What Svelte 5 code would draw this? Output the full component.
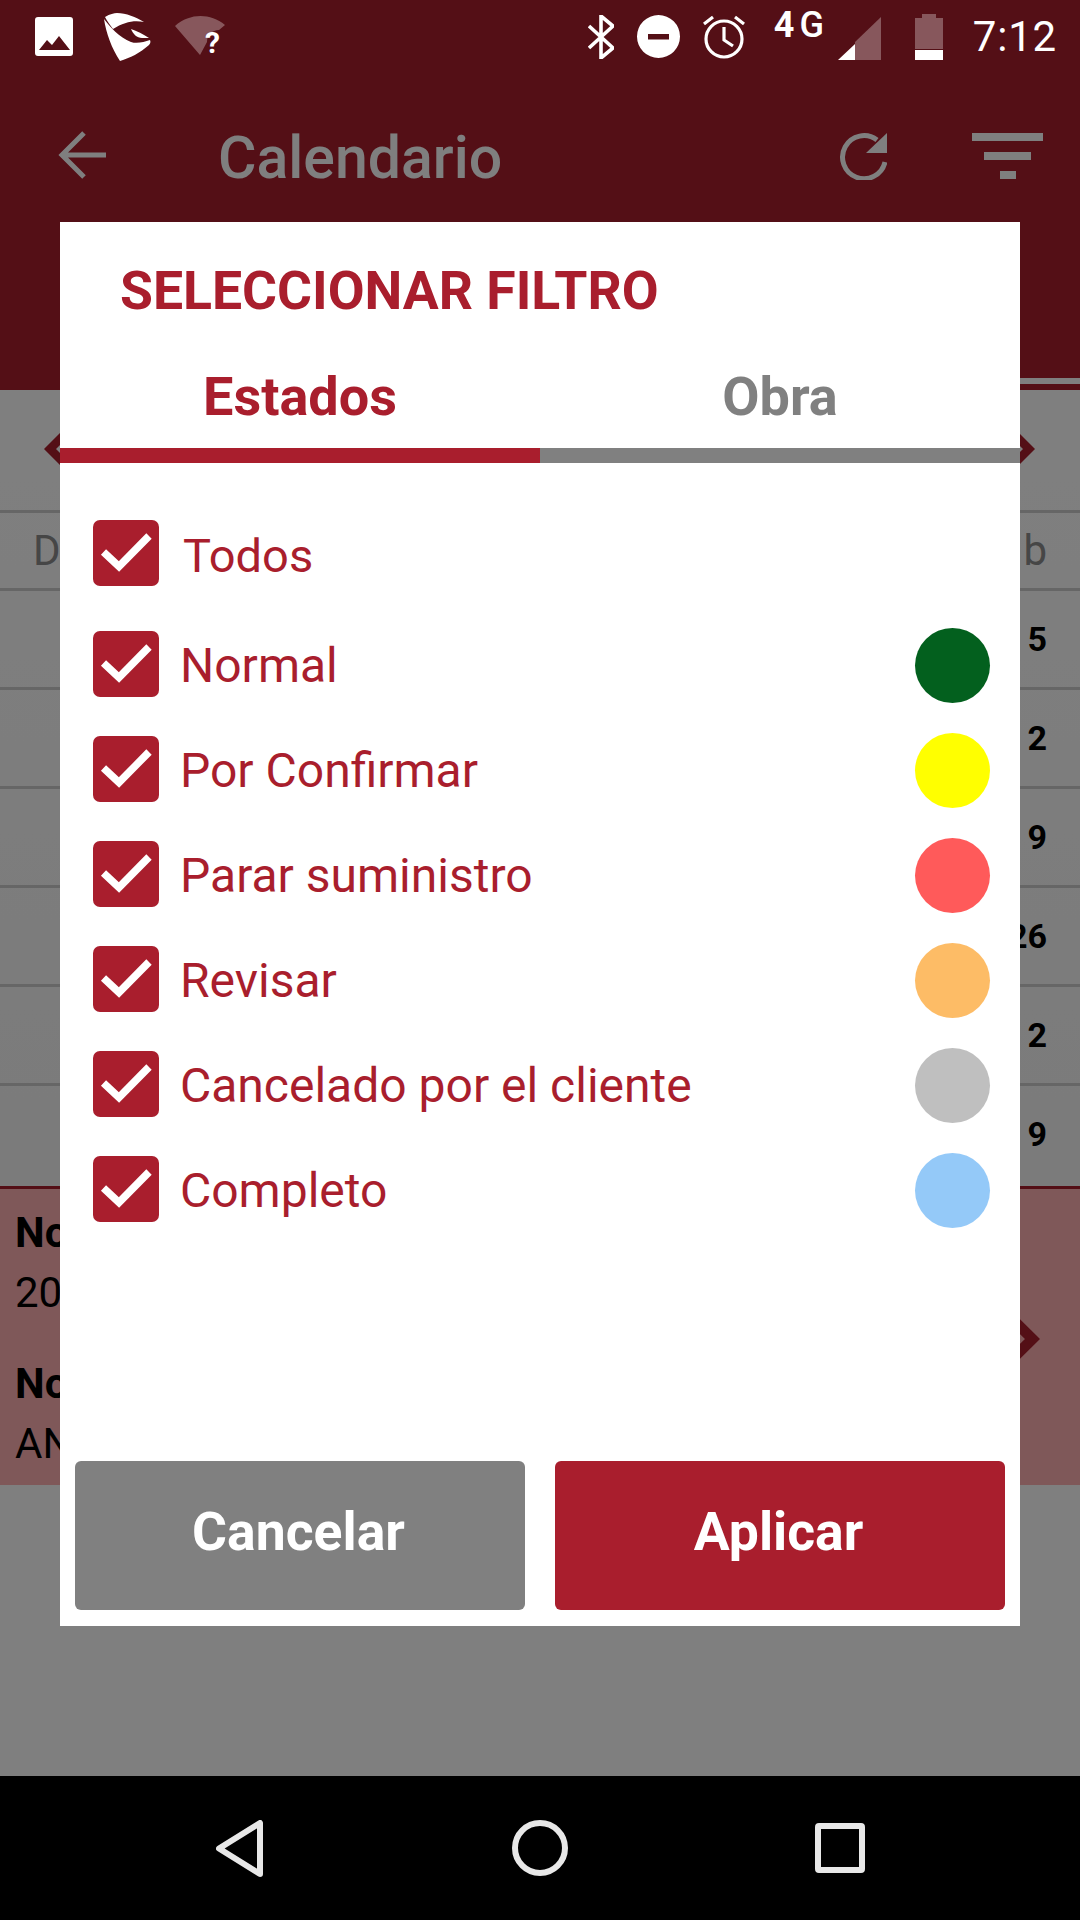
<script>
  const weeks = ['5', '2', '9', '26', '2', '9'];
  const filters = [
    { label: 'Normal', color: '#03601e' },
    { label: 'Por Confirmar', color: '#ffff00' },
    { label: 'Parar suministro', color: '#ff5a5a' },
    { label: 'Revisar', color: '#fdbc66' },
    { label: 'Cancelado por el cliente', color: '#bfbfbf' },
    { label: 'Completo', color: '#94c9f8' }
  ];
</script>

{#snippet check()}
  <svg class="check" viewBox="0 0 66 66" aria-hidden="true">
    <rect width="66" height="66" rx="7" fill="#a91e2d" />
    <path d="M10.500 32 L26 46.500 L56 16" fill="none" stroke="#fff" stroke-width="7.500" />
  </svg>
{/snippet}

<div class="screen">
  <header class="top">
    <div class="status">
      <div class="status-left">
        <svg class="s-image" viewBox="0 0 38 39"><path fill-rule="evenodd" fill="#fff" d="M3 0h32a3 3 0 0 1 3 3v33a3 3 0 0 1-3 3H3a3 3 0 0 1-3-3V3a3 3 0 0 1 3-3zM4 33h31L24 19l-7 9-5-5z"/></svg>
        <svg class="s-logo" viewBox="0 0 48 50"><path fill="#fff" d="M1 6C6 3 10 2 13 2 22 2 32 6 40 11 30 9 20 11 9 18 6 14 3 10 1 6ZM0 8C6 16 15 26 27 31 33 33 40 31 46 29 47 31 46 33 45 34 36 42 26 47 16 50 8 38 2 22 0 8ZM27 18C33 20 39 23 45 27L38 27C33 27 29 23 27 18Z"/></svg>
        <div class="s-wifi">
          <svg viewBox="0 0 50 42"><path fill="#fff" fill-opacity=".3" d="M0 10C15-3 35-3 50 9L44 14C37 14 32 19 32 26L25 39Z"/></svg>
          <span>?</span>
        </div>
      </div>
      <div class="status-right">
        <svg class="s-bt" viewBox="0 0 26 44"><path fill="none" stroke="#fff" stroke-width="3.6" d="M1 11 L25 33 L13 43 V1 L25 11 L1 33"/></svg>
        <svg class="s-dnd" viewBox="0 0 43 43"><path fill="#fff" fill-rule="evenodd" d="M21.5 0a21.5 21.5 0 1 1 0 43a21.5 21.5 0 1 1 0-43zM11 19v5.500h21V19z"/></svg>
        <svg class="s-alarm" viewBox="0 0 42 44"><g fill="none" stroke="#fff" stroke-width="3.200"><circle cx="21" cy="24" r="18"/><path d="M21 12v13l9 6M1 9l9-7M41 9l-9-7"/></g></svg>
        <span class="s-net"><b>4</b>G</span>
        <svg class="s-signal" viewBox="0 0 43 43"><path fill="#fff" fill-opacity=".3" d="M43 0V43H17V25Z"/><path fill="#fff" d="M0 43 17 27V43Z"/></svg>
        <svg class="s-battery" viewBox="0 0 28 46"><path fill="#fff" fill-opacity=".3" d="M7 0h14v4h7v31H0V4h7z"/><rect y="36" width="28" height="10" fill="#fff"/></svg>
        <span class="s-time">7:12</span>
      </div>
    </div>
    <div class="appbar">
      <svg class="a-back" viewBox="0 0 48 48"><path fill="none" stroke="#fff" stroke-width="5" d="M48 24H4M26 2 4 24l22 22"/></svg>
      <h1>Calendario</h1>
      <svg class="a-refresh" viewBox="0 0 48 48"><path fill="none" stroke="#fff" stroke-width="5" d="M46 30A21.500 21.500 0 1 1 38 8"/><path fill="#fff" d="M48 1V21H27Z"/></svg>
      <div class="a-filter"><i></i><i></i><i></i></div>
    </div>
    <div class="tab-stripe"></div>
  </header>

  <section class="calendar">
    <div class="month">
      <svg class="chev" viewBox="0 0 40 60"><path fill="none" stroke="#a91e2d" stroke-width="8.500" d="M36 0 6 30l30 30"/></svg>
      <svg class="chev" viewBox="0 0 40 60"><path fill="none" stroke="#a91e2d" stroke-width="8.500" d="M4 0l30 30-30 30"/></svg>
    </div>
    <div class="days"><span>Dom</span><span>Sab</span></div>
    {#each weeks as day}
      <div class="week"><span>{day}</span></div>
    {/each}
  </section>

  <section class="detail">
    <div class="detail-text">
      <b>No</b><span>20</span>
      <b class="second">No</b><span>AN</span>
    </div>
    <svg class="chev low" viewBox="0 0 40 60"><path fill="none" stroke="#a91e2d" stroke-width="10.600" d="M2 0l30.500 30L2 60"/></svg>
  </section>

  <div class="rest"></div>
  <footer class="nav">
    <svg class="n-back" viewBox="0 0 48 57"><path fill="none" stroke="#e8e8e8" stroke-width="6" stroke-linejoin="round" d="M44 3V54L3 28.500Z"/></svg>
    <svg class="n-home" viewBox="0 0 56 56"><circle cx="28" cy="28" r="25" fill="none" stroke="#e8e8e8" stroke-width="6"/></svg>
    <svg class="n-square" viewBox="0 0 50 50"><rect x="3" y="3" width="44" height="44" rx="1" fill="none" stroke="#e8e8e8" stroke-width="6"/></svg>
  </footer>

  <div class="scrim"></div>

  <div class="dialog">
    <h2>SELECCIONAR FILTRO</h2>
    <div class="tabs">
      <div class="tab active">Estados</div>
      <div class="tab">Obra</div>
    </div>
    <div class="list">
      <div class="row todos">
        {@render check()}
        <span class="label">Todos</span>
      </div>
      {#each filters as f}
        <div class="row">
          {@render check()}
          <span class="label">{f.label}</span>
          <span class="dot" style:background={f.color}></span>
        </div>
      {/each}
    </div>
    <div class="actions">
      <button class="cancel">Cancelar</button>
      <button class="apply">Aplicar</button>
    </div>
  </div>
</div>

<style>
  :global(body) { margin: 0; background: #000; }
  .screen {
    position: relative;
    width: 1080px;
    height: 1920px;
    overflow: hidden;
    display: flex;
    flex-direction: column;
    background: #fff;
    font-family: Roboto, "Liberation Sans", sans-serif;
  }

  .top { position: relative; height: 390px; background: #a91e2d; flex: none; }
  .status {
    position: relative;
    z-index: 3;
    height: 72px;
    display: flex;
    justify-content: space-between;
    align-items: flex-start;
    color: #fff;
  }
  .status-left { display: flex; align-items: flex-start; padding-left: 35px; }
  .status-right { display: flex; align-items: flex-start; padding-right: 23px; }
  .status svg { display: block; flex: none; }
  .s-image { width: 38px; height: 39px; margin-top: 17px; }
  .s-logo { width: 48px; height: 50px; margin: 11px 0 0 31px; }
  .s-wifi { position: relative; width: 50px; height: 42px; margin: 16px 0 0 23px; }
  .s-wifi span {
    position: absolute;
    left: 30px;
    top: 11px;
    font-size: 30px;
    line-height: 32px;
    font-weight: 700;
  }
  .s-bt { width: 26px; height: 44px; margin-top: 15px; }
  .s-dnd { width: 43px; height: 43px; margin: 15px 0 0 23px; }
  .s-alarm { width: 42px; height: 44px; margin: 15px 0 0 23px; }
  .s-net {
    width: 52px;
    margin: 4px 0 0 29px;
    font-size: 36px;
    line-height: 42px;
    font-weight: 500;
    white-space: nowrap;
  }
  .s-net b { font-weight: 700; margin-right: 5px; }
  .s-signal { width: 43px; height: 43px; margin: 17px 0 0 12px; }
  .s-battery { width: 28px; height: 46px; margin: 14px 0 0 34px; }
  .s-time {
    margin: 12px 0 0 30px;
    font-size: 42px;
    line-height: 50px;
    letter-spacing: 0.800px;
  }

  .appbar { display: flex; align-items: flex-start; color: #fff; height: 306px; }
  .appbar svg { display: block; flex: none; }
  .a-back { width: 48px; height: 48px; margin: 59px 0 0 58px; }
  h1 {
    margin: 0 0 0 112px;
    padding-top: 54px;
    flex: 1;
    font-size: 59px;
    line-height: 64px;
    font-weight: 500;
  }
  .a-refresh { width: 48px; height: 48px; margin: 60px 0 0 0; }
  .a-filter {
    width: 71px;
    margin: 61px 37px 0 85px;
    display: flex;
    flex-direction: column;
    align-items: center;
    gap: 11px;
  }
  .a-filter i { display: block; height: 8px; background: #fff; }
  .a-filter i:nth-child(1) { width: 71px; }
  .a-filter i:nth-child(2) { width: 47px; }
  .a-filter i:nth-child(3) { width: 16px; }
  .tab-stripe {
    position: absolute;
    left: 540px;
    right: 0;
    bottom: 6px;
    height: 6px;
    background: #fff;
  }

  .calendar { height: 796px; flex: none; background: linear-gradient(#fff, #f6f6f6); }
  .month {
    height: 123px;
    box-sizing: border-box;
    display: flex;
    justify-content: space-between;
    padding: 29px 45px 0 44px;
    border-bottom: 3px solid #ccc;
  }
  .chev { width: 40px; height: 60px; display: block; flex: none; }
  .chev.low { margin-top: 3px; }
  .days {
    height: 78px;
    box-sizing: border-box;
    display: flex;
    justify-content: space-between;
    align-items: center;
    padding: 0 31px 0 33px;
    font-size: 42px;
    letter-spacing: 2px;
    color: #8c8c8c;
    border-bottom: 3px solid #ccc;
  }
  .week {
    height: 99px;
    box-sizing: border-box;
    display: flex;
    justify-content: flex-end;
    align-items: center;
    padding: 0 33px 0 0;
    font-size: 34px;
    font-weight: 700;
    color: #000;
    border-bottom: 3px solid #ccc;
  }
  .week:last-child { border-bottom-color: transparent; }

  .detail {
    height: 299px;
    flex: none;
    box-sizing: border-box;
    display: flex;
    justify-content: space-between;
    align-items: center;
    padding: 0 40px 0 15px;
    background: #ffb0b2;
    border-top: 3px solid #a91e2d;
    color: #000;
  }
  .detail-text { display: flex; flex-direction: column; font-size: 42px; line-height: 60px; padding-top: 3px; }
  .detail-text .second { margin-top: 31px; }

  .rest { flex: 1; background: #fff; }
  .nav {
    position: relative;
    z-index: 3;
    height: 144px;
    flex: none;
    background: #000;
    display: flex;
    align-items: flex-start;
    padding-left: 216px;
  }
  .nav svg { display: block; flex: none; }
  .n-back { width: 48px; height: 57px; margin-top: 44px; }
  .n-home { width: 56px; height: 56px; margin: 44px 0 0 248px; }
  .n-square { width: 50px; height: 50px; margin: 47px 0 0 247px; }

  .scrim { position: absolute; inset: 0 0 144px 0; background: rgba(0, 0, 0, 0.5); z-index: 2; }

  .dialog {
    position: absolute;
    z-index: 2;
    left: 60px;
    top: 222px;
    width: 960px;
    height: 1404px;
    background: #fff;
    display: flex;
    flex-direction: column;
  }
  h2 {
    margin: 0;
    padding: 38px 0 0 60px;
    height: 70px;
    font-size: 53.500px;
    line-height: 62px;
    font-weight: 700;
    color: #a91e2d;
  }
  .tabs { display: flex; margin-top: 29px; }
  .tab {
    flex: 1;
    height: 104px;
    box-sizing: border-box;
    text-align: center;
    font-size: 54px;
    line-height: 62px;
    font-weight: 700;
    padding-top: 7px;
    color: #808080;
    border-bottom: 15px solid #808080;
  }
  .tab.active { color: #a91e2d; border-color: #a91e2d; }
  .list { padding: 37px 30px 0 33px; }
  .row {
    height: 105px;
    display: flex;
    align-items: center;
    color: #a91e2d;
    font-size: 48px;
  }
  .row.todos { margin-bottom: 7px; font-size: 47px; }
  .row .check { margin-top: -1px; }
  .row.todos .check { margin-top: 0; }
  .check { width: 66px; height: 66px; display: block; flex: none; }
  .label { margin-left: 21px; flex: 1; padding-top: 2px; }
  .todos .label { margin-left: 24px; padding-top: 5px; }
  .dot { width: 75px; height: 75px; border-radius: 50%; flex: none; margin-top: 2px; }
  .actions { margin-top: auto; display: flex; gap: 30px; padding: 0 15px 16px; }
  button {
    flex: 1;
    height: 149px;
    border: 0;
    border-radius: 6px;
    color: #fff;
    font-family: inherit;
    font-size: 53.500px;
    font-weight: 700;
    padding: 0 3px 8px 0;
  }
  .cancel { background: #808080; }
  .apply { background: #a91e2d; }
</style>
